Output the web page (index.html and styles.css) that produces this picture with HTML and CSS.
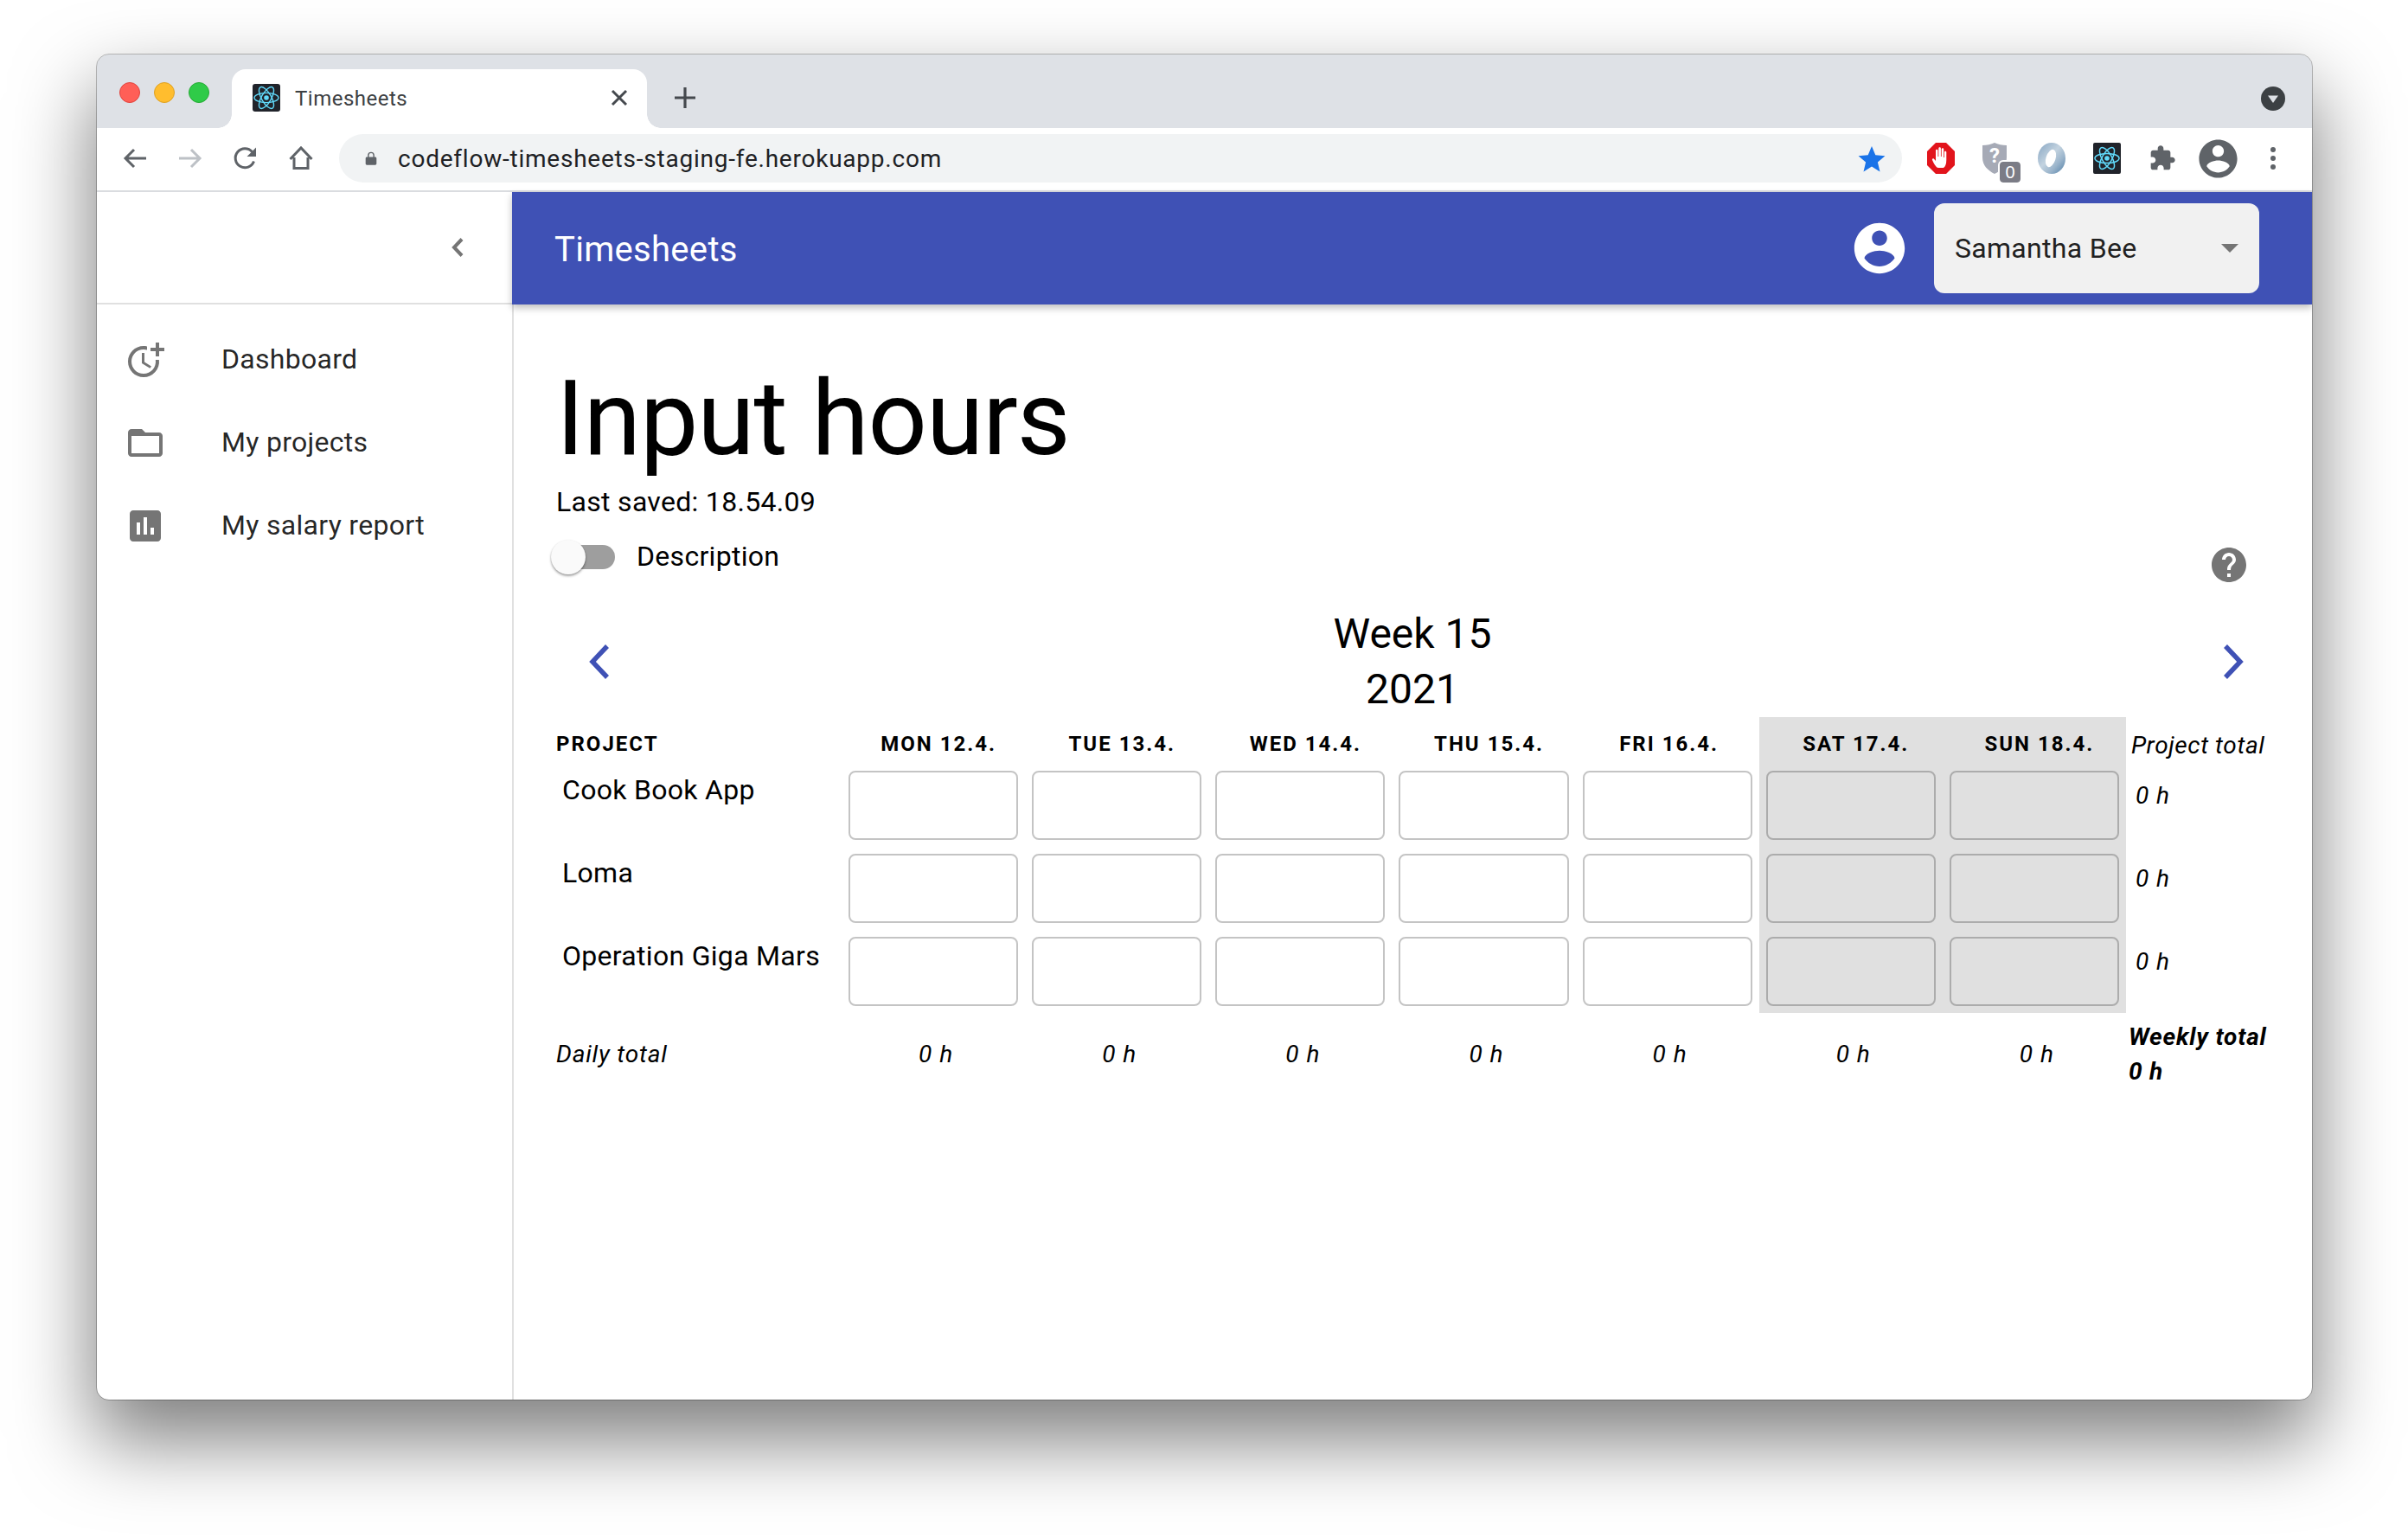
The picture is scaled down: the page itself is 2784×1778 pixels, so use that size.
FILE: index.html
```html
<!DOCTYPE html>
<html lang="en">

<head>
    <meta charset="UTF-8">
    <title>Timesheets</title>
    <link rel="stylesheet" href="styles.css">
</head>

<body>
    <div class="window">
        <!-- Browser chrome -->
        <div class="tab-strip">
            <div class="traffic">
                <span class="light light-red"></span>
                <span class="light light-yellow"></span>
                <span class="light light-green"></span>
            </div>
            <div class="tab">
                <svg class="favicon" viewBox="0 0 32 32">
                    <rect width="32" height="32" rx="3" fill="#20232a"/>
                    <g fill="none" stroke="#61dafb" stroke-width="1.4">
                        <ellipse cx="16" cy="16" rx="14" ry="5.6"/>
                        <ellipse cx="16" cy="16" rx="14" ry="5.6" transform="rotate(60 16 16)"/>
                        <ellipse cx="16" cy="16" rx="14" ry="5.6" transform="rotate(120 16 16)"/>
                    </g>
                    <circle cx="16" cy="16" r="2.8" fill="#61dafb"/>
                </svg>
                <span class="tab-title">Timesheets</span>
                <svg class="tab-close" viewBox="0 0 20 20"><path d="M2 2l16 16M18 2L2 18" stroke="#45494e" stroke-width="3" fill="none"/></svg>
            </div>
            <svg class="new-tab" viewBox="0 0 26 26"><path d="M13 1v24M1 13h24" stroke="#45494e" stroke-width="3.2" fill="none"/></svg>
            <div class="profile-dot">
                <svg viewBox="0 0 28 28"><circle cx="14" cy="14" r="14" fill="#3c4043"/><path d="M8 10.500h12L14 19z" fill="#dee1e6"/></svg>
            </div>
        </div>

        <div class="toolbar">
            <button class="tool-btn">
                <svg viewBox="0 0 32 32"><path d="M29 16H6M15 6L5 16l10 10" fill="none" stroke="#5f6368" stroke-width="3"/></svg>
            </button>
            <button class="tool-btn">
                <svg viewBox="0 0 32 32"><path d="M3 16h23M17 6l10 10-10 10" fill="none" stroke="#bdc1c6" stroke-width="3"/></svg>
            </button>
            <button class="tool-btn">
                <svg viewBox="0 0 32 32"><path d="M25.500 19.500A11 11 0 1 1 23.500 8.500" fill="none" stroke="#5f6368" stroke-width="3"/><path d="M28 3.500V14H17.500z" fill="#5f6368"/></svg>
            </button>
            <button class="tool-btn">
                <svg viewBox="0 0 32 32"><path d="M8 15v12.500h16V15M3.500 17L16 4l12.500 13" fill="none" stroke="#5f6368" stroke-width="3"/></svg>
            </button>

            <div class="address-bar">
                <svg class="lock" viewBox="0 0 20 24"><path d="M3 10h1.500V7a5.500 5.500 0 0 1 11 0v3H17c1 0 2 1 2 2v9c0 1-1 2-2 2H3c-1 0-2-1-2-2v-9c0-1 1-2 2-2zm3.500 0h7V7a3.500 3.500 0 0 0-7 0z" fill="#5f6368"/></svg>
                <span class="url">codeflow-timesheets-staging-fe.herokuapp.com</span>
                <svg class="star" viewBox="0 0 32 32"><path d="M16 2l4.300 10.300 11.100.9-8.500 7.300 2.600 10.900L16 25.500 6.500 31.400l2.600-10.900L.600 13.200l11.100-.9z" fill="#1a73e8"/></svg>
            </div>

            <div class="ext-group">
                <button class="tool-btn">
                    <svg class="ext-icon" viewBox="0 0 32 36">
                        <path d="M10 0h12l10 10v16L22 36H10L0 26V10z" fill="#e2141c"/>
                        <path d="M10 27c-1.500-2-3-4.500-4-7-.5-1.300 1-2.300 2-1.200l2 2.200V9c0-1.800 2.500-1.800 2.500 0v7h.8V6.500c0-1.800 2.600-1.800 2.600 0V16h.8V7.500c0-1.800 2.500-1.800 2.500 0V17h.8v-6c0-1.700 2.300-1.700 2.300 0v9c0 5-1.500 8-3.500 9H13c-1.300 0-2.200-.8-3-2z" fill="#fff"/>
                    </svg>
                </button>
                <button class="tool-btn">
                    <span class="shield-wrap">
                        <svg class="shield" viewBox="0 0 28 36">
                            <path d="M14 0c4 2 9 3 14 3v14c0 9-6 15-14 19C6 32 0 26 0 17V3c5 0 10-1 14-3z" fill="#a6aab6"/>
                            <text class="shield-mark" x="14" y="23" text-anchor="middle">?</text>
                        </svg>
                        <span class="badge">0</span>
                    </span>
                </button>
                <button class="tool-btn">
                    <svg class="ext-icon" viewBox="0 0 32 36">
                        <defs>
                            <linearGradient id="ringFill" x1="0" y1="0" x2="1" y2="1">
                                <stop offset="0" stop-color="#86a5c2"/>
                                <stop offset=".45" stop-color="#c3d3e0"/>
                                <stop offset=".7" stop-color="#9ab4cb"/>
                                <stop offset="1" stop-color="#4f7ea6"/>
                            </linearGradient>
                        </defs>
                        <ellipse cx="16" cy="18" rx="16" ry="18" fill="url(#ringFill)"/>
                        <ellipse cx="15" cy="18" rx="5.500" ry="10.500" transform="rotate(18 15 18)" fill="#fff"/>
                    </svg>
                </button>
                <button class="tool-btn">
                    <svg class="ext-icon" viewBox="0 0 32 36">
                        <rect width="32" height="36" rx="2" fill="#20232a"/>
                        <g fill="none" stroke="#61dafb" stroke-width="1.5">
                            <ellipse cx="16" cy="18" rx="14" ry="5.600"/>
                            <ellipse cx="16" cy="18" rx="14" ry="5.600" transform="rotate(60 16 18)"/>
                            <ellipse cx="16" cy="18" rx="14" ry="5.600" transform="rotate(120 16 18)"/>
                        </g>
                        <circle cx="16" cy="18" r="2.800" fill="#61dafb"/>
                    </svg>
                </button>
                <button class="tool-btn">
                    <svg class="puzzle" viewBox="0 0 24 24"><path d="M20.500 11H19V7c0-1.100-.9-2-2-2h-4V3.500C13 2.120 11.880 1 10.500 1S8 2.120 8 3.500V5H4c-1.100 0-1.990.9-1.990 2v3.800H3.500c1.490 0 2.700 1.210 2.700 2.700s-1.210 2.700-2.700 2.700H2V20c0 1.100.9 2 2 2h3.800v-1.500c0-1.490 1.210-2.700 2.700-2.700 1.490 0 2.700 1.210 2.700 2.700V22H17c1.100 0 2-.9 2-2v-4h1.500c1.380 0 2.500-1.120 2.500-2.500S21.880 11 20.500 11z" fill="#5f6368"/></svg>
                </button>
                <button class="tool-btn">
                    <svg class="chrome-avatar" viewBox="0 0 24 24"><path d="M12 2C6.480 2 2 6.480 2 12s4.480 10 10 10 10-4.480 10-10S17.520 2 12 2zm0 3c1.660 0 3 1.340 3 3s-1.340 3-3 3-3-1.340-3-3 1.340-3 3-3zm0 14.200c-2.500 0-4.710-1.280-6-3.220.03-1.990 4-3.080 6-3.080 1.990 0 5.970 1.090 6 3.080-1.290 1.940-3.500 3.220-6 3.220z" fill="#5f6368"/></svg>
                </button>
                <button class="tool-btn">
                    <span class="menu-dots"><i></i><i></i><i></i></span>
                </button>
            </div>
        </div>

        <!-- App -->
        <div class="app">
            <aside class="sidebar">
                <div class="sidebar-head">
                    <svg class="collapse" viewBox="0 0 16 24"><path d="M13 2.500L4 12l9 9.500" fill="none" stroke="#757575" stroke-width="4"/></svg>
                </div>
                <nav class="side-nav">
                    <a class="side-item">
                        <svg viewBox="0 0 24 24"><path d="M10 8v6l4.700 2.900.8-1.200-4-2.400V8z M17.920 12A6.957 6.957 0 0 1 11 20c-3.900 0-7-3.100-7-7s3.100-7 7-7c.7 0 1.370.1 2 .29V4.230C12.360 4.080 11.690 4 11 4c-5 0-9 4-9 9s4 9 9 9a8.963 8.963 0 0 0 8.940-10h-2.020z M20 5V2h-2v3h-3v2h3v3h2V7h3V5z" fill="#757575"/></svg>
                        <span>Dashboard</span>
                    </a>
                    <a class="side-item">
                        <svg viewBox="0 0 24 24"><path d="M20 6h-8l-2-2H4c-1.100 0-1.990.9-1.990 2L2 18c0 1.100.9 2 2 2h16c1.100 0 2-.9 2-2V8c0-1.100-.9-2-2-2zm0 12H4V8h16v10z" fill="#757575"/></svg>
                        <span>My projects</span>
                    </a>
                    <a class="side-item">
                        <svg viewBox="0 0 24 24"><path d="M19 3H5c-1.100 0-2 .9-2 2v14c0 1.100.9 2 2 2h14c1.100 0 2-.9 2-2V5c0-1.100-.9-2-2-2zM9 17H7v-7h2v7zm4 0h-2V7h2v10zm4 0h-2v-4h2v4z" fill="#757575"/></svg>
                        <span>My salary report</span>
                    </a>
                </nav>
            </aside>

            <div class="main">
                <header class="app-bar">
                    <div class="app-title">Timesheets</div>
                    <svg class="user-icon" viewBox="0 0 24 24"><path d="M12 2C6.480 2 2 6.480 2 12s4.480 10 10 10 10-4.480 10-10S17.520 2 12 2zm0 3c1.660 0 3 1.340 3 3s-1.340 3-3 3-3-1.340-3-3 1.340-3 3-3zm0 14.200c-2.500 0-4.710-1.280-6-3.220.03-1.990 4-3.080 6-3.080 1.990 0 5.970 1.090 6 3.080-1.290 1.940-3.500 3.220-6 3.220z" fill="#fff"/></svg>
                    <div class="user-select">
                        <span>Samantha Bee</span>
                        <span class="select-arrow"></span>
                    </div>
                </header>

                <section class="content">
                    <h1 class="page-title">Input hours</h1>
                    <p class="last-saved">Last saved: 18.54.09</p>

                    <div class="options-row">
                        <label class="switch-label">
                            <span class="switch"><span class="switch-thumb"></span></span>
                            Description
                        </label>
                        <svg class="help-icon" viewBox="0 0 24 24"><path d="M12 2C6.480 2 2 6.480 2 12s4.480 10 10 10 10-4.480 10-10S17.520 2 12 2zm1 17h-2v-2h2v2zm2.070-7.750l-.9.92C13.450 12.900 13 13.500 13 15h-2v-.5c0-1.100.45-2.100 1.170-2.830l1.240-1.260c.37-.36.59-.86.59-1.410 0-1.100-.9-2-2-2s-2 .9-2 2H8c0-2.210 1.790-4 4-4s4 1.790 4 4c0 .88-.36 1.680-.93 2.250z" fill="#757575"/></svg>
                    </div>

                    <div class="week-row">
                        <button class="week-btn">
                            <svg viewBox="0 0 24 40"><path d="M21 2L4 20l17 18" fill="none" stroke="#3f51b5" stroke-width="5.500"/></svg>
                        </button>
                        <div class="week-title">Week 15<br>2021</div>
                        <button class="week-btn">
                            <svg viewBox="0 0 24 40"><path d="M3 2l17 18L3 38" fill="none" stroke="#3f51b5" stroke-width="5.500"/></svg>
                        </button>
                    </div>

                    <table class="hours">
                        <colgroup>
                            <col class="col-project">
                            <col span="7" class="col-day">
                            <col class="col-total">
                        </colgroup>
                        <thead>
                            <tr>
                                <th class="head-project">PROJECT</th>
                                <th class="head-day">MON 12.4.</th>
                                <th class="head-day">TUE 13.4.</th>
                                <th class="head-day">WED 14.4.</th>
                                <th class="head-day">THU 15.4.</th>
                                <th class="head-day head-fri">FRI 16.4.</th>
                                <th class="head-day weekend">SAT 17.4.</th>
                                <th class="head-day weekend">SUN 18.4.</th>
                                <th class="head-total">Project total</th>
                            </tr>
                        </thead>
                        <tbody>
                            <tr>
                                <td class="project-name">Cook Book App</td>
                                <td><input class="hour-input" type="text"></td>
                                <td><input class="hour-input" type="text"></td>
                                <td><input class="hour-input" type="text"></td>
                                <td><input class="hour-input" type="text"></td>
                                <td><input class="hour-input" type="text"></td>
                                <td class="weekend"><input class="hour-input" type="text"></td>
                                <td class="weekend"><input class="hour-input" type="text"></td>
                                <td class="row-total">0 h</td>
                            </tr>
                            <tr>
                                <td class="project-name">Loma</td>
                                <td><input class="hour-input" type="text"></td>
                                <td><input class="hour-input" type="text"></td>
                                <td><input class="hour-input" type="text"></td>
                                <td><input class="hour-input" type="text"></td>
                                <td><input class="hour-input" type="text"></td>
                                <td class="weekend"><input class="hour-input" type="text"></td>
                                <td class="weekend"><input class="hour-input" type="text"></td>
                                <td class="row-total">0 h</td>
                            </tr>
                            <tr>
                                <td class="project-name">Operation Giga Mars</td>
                                <td><input class="hour-input" type="text"></td>
                                <td><input class="hour-input" type="text"></td>
                                <td><input class="hour-input" type="text"></td>
                                <td><input class="hour-input" type="text"></td>
                                <td><input class="hour-input" type="text"></td>
                                <td class="weekend"><input class="hour-input" type="text"></td>
                                <td class="weekend"><input class="hour-input" type="text"></td>
                                <td class="row-total">0 h</td>
                            </tr>
                        </tbody>
                        <tfoot>
                            <tr>
                                <td class="foot-label">Daily total</td>
                                <td class="foot-day">0 h</td>
                                <td class="foot-day">0 h</td>
                                <td class="foot-day">0 h</td>
                                <td class="foot-day">0 h</td>
                                <td class="foot-day">0 h</td>
                                <td class="foot-day">0 h</td>
                                <td class="foot-day">0 h</td>
                                <td class="foot-total">Weekly total<br>0 h</td>
                            </tr>
                        </tfoot>
                    </table>
                </section>
            </div>
        </div>
    </div>
</body>

</html>
```

FILE: styles.css
```css
/* Base Styles */
* {
    box-sizing: border-box;
}

html,
body {
    margin: 0;
    padding: 0;
}

body {
    width: 2784px;
    height: 1778px;
    padding: 63px 0 0 112px;
    background-color: #fff;
    font-family: Roboto, "Liberation Sans", sans-serif;
    color: rgba(0, 0, 0, 0.87);
    overflow: hidden;
}

button {
    padding: 0;
    border: 0;
    background: none;
}

svg {
    display: block;
}

.window {
    display: flex;
    flex-direction: column;
    width: 2561px;
    height: 1555px;
    background-color: #fff;
    border-radius: 14px;
    outline: 1px solid rgba(0, 0, 0, 0.25);
    box-shadow: 0 44px 90px 4px rgba(0, 0, 0, 0.5);
    overflow: hidden;
}

/* Tab strip */
.tab-strip {
    display: flex;
    align-items: flex-end;
    flex: 0 0 85px;
    background-color: #dee1e6;
}

.traffic {
    display: flex;
    gap: 16px;
    align-self: flex-start;
    width: 156px;
    padding: 32px 0 0 26px;
}

.light {
    width: 24px;
    height: 24px;
    border-radius: 50%;
}

.light-red {
    background-color: #ff5f57;
    border: 1px solid #e0443e;
}

.light-yellow {
    background-color: #ffbd2e;
    border: 1px solid #dea123;
}

.light-green {
    background-color: #2fcb48;
    border: 1px solid #27aa35;
}

.tab {
    position: relative;
    display: flex;
    align-items: center;
    width: 480px;
    height: 68px;
    padding: 0 22px 2px 24px;
    background-color: #fff;
    border-radius: 16px 16px 0 0;
}

.tab::before,
.tab::after {
    content: "";
    position: absolute;
    bottom: 0;
    width: 16px;
    height: 16px;
}

.tab::before {
    left: -16px;
    background: radial-gradient(circle at 0 0, transparent 15.5px, #fff 16px);
}

.tab::after {
    right: -16px;
    background: radial-gradient(circle at 100% 0, transparent 15.5px, #fff 16px);
}

.favicon {
    width: 32px;
    height: 32px;
    margin-right: 17px;
}

.tab-title {
    flex: 1;
    padding-top: 1px;
    font-size: 24px;
    letter-spacing: 0.5px;
    color: #3c4043;
}

.tab-close {
    width: 20px;
    height: 20px;
}

.new-tab {
    width: 26px;
    height: 26px;
    margin: 0 0 22px 31px;
}

.profile-dot {
    margin: 0 31px 20px auto;
}

.profile-dot svg {
    width: 28px;
    height: 28px;
}

/* Toolbar */
.toolbar {
    display: flex;
    align-items: center;
    flex: 0 0 74px;
    padding: 0 13px 2px 12px;
    border-bottom: 2px solid #dadce0;
}

.tool-btn {
    display: flex;
    align-items: center;
    justify-content: center;
    width: 64px;
    height: 64px;
}

.tool-btn svg {
    width: 32px;
    height: 32px;
}

.address-bar {
    display: flex;
    align-items: center;
    flex: 1;
    height: 56px;
    margin: 0 13px 0 12px;
    padding: 0 19px 0 30px;
    background-color: #f1f3f4;
    border-radius: 28px;
}

.lock {
    width: 14px;
    height: 20px;
    margin-right: 24px;
}

.url {
    flex: 1;
    font-size: 28px;
    letter-spacing: 0.77px;
    color: #202124;
}

.address-bar .star {
    width: 32px;
    height: 32px;
}

.ext-group {
    display: flex;
}

.tool-btn .ext-icon {
    width: 32px;
    height: 36px;
}

.shield-wrap {
    position: relative;
    display: block;
    width: 32px;
    height: 36px;
}

.tool-btn .shield {
    width: 28px;
    height: 36px;
}

.shield-mark {
    font-family: Roboto, sans-serif;
    font-size: 24px;
    font-weight: 700;
    fill: #fff;
}

.badge {
    position: absolute;
    top: 22px;
    left: 20px;
    width: 24px;
    height: 24px;
    border: 0;
    border-radius: 4px;
    background-color: #7b7c86;
    outline: 2px solid #fff;
    color: #fff;
    font-size: 20px;
    line-height: 25px;
    text-align: center;
}

.tool-btn .chrome-avatar {
    width: 53px;
    height: 53px;
    flex: none;
}

.menu-dots {
    display: flex;
    flex-direction: column;
    gap: 4px;
}

.menu-dots i {
    width: 6px;
    height: 6px;
    border-radius: 50%;
    background-color: #5f6368;
}

/* App layout */
.app {
    display: flex;
    flex: 1;
    min-height: 0;
}

.sidebar {
    flex: 0 0 482px;
    border-right: 2px solid #e0e0e0;
}

.sidebar-head {
    display: flex;
    align-items: center;
    justify-content: flex-end;
    height: 130px;
    padding-right: 55px;
    border-bottom: 2px solid #e0e0e0;
}

.collapse {
    width: 16px;
    height: 24px;
}

.side-nav {
    padding-top: 16px;
}

.side-item {
    display: flex;
    align-items: center;
    height: 96px;
    padding-left: 32px;
    font-size: 32px;
    letter-spacing: 0.3px;
}

.side-item svg {
    width: 48px;
    height: 48px;
    margin-right: 64px;
}

.side-item span {
    padding-bottom: 3px;
}

.main {
    flex: 1;
    min-width: 0;
}

.app-bar {
    display: flex;
    align-items: center;
    height: 130px;
    margin-left: -2px;
    padding: 0 61px 0 49px;
    background-color: #3f51b5;
    color: #fff;
    box-shadow: 0 4px 8px rgba(0, 0, 0, 0.25);
}

.app-title {
    flex: 1;
    padding-top: 2px;
    font-size: 40px;
    letter-spacing: 0.3px;
}

.user-icon {
    width: 70px;
    height: 70px;
    margin-right: 28px;
}

.user-select {
    display: flex;
    align-items: center;
    justify-content: space-between;
    width: 376px;
    height: 104px;
    padding: 0 24px 0 24px;
    background-color: #f1f1f1;
    border-radius: 12px;
    color: #212121;
    font-size: 32px;
    letter-spacing: 0.3px;
}

.select-arrow {
    border-left: 10px solid transparent;
    border-right: 10px solid transparent;
    border-top: 10px solid #757575;
}

/* Content */
.content {
    padding: 60px 31px 0 49px;
}

.page-title {
    margin: 0;
    font-size: 120px;
    font-weight: 400;
    line-height: 144px;
    letter-spacing: -1px;
    color: #000;
}

.last-saved {
    margin: 0;
    font-size: 32px;
    line-height: 48px;
    letter-spacing: 0.3px;
    color: #000;
}

.options-row {
    display: flex;
    justify-content: space-between;
    height: 97px;
    padding-right: 41px;
}

.switch-label {
    display: flex;
    align-items: center;
    height: 78px;
    font-size: 32px;
    letter-spacing: 0.3px;
    color: #000;
}

.switch {
    position: relative;
    width: 68px;
    height: 28px;
    margin: 2px 25px 0 0;
    background-color: #9e9e9e;
    border-radius: 14px;
}

.switch-thumb {
    position: absolute;
    top: -6px;
    left: -6px;
    width: 40px;
    height: 40px;
    background-color: #fafafa;
    border-radius: 50%;
    box-shadow: 0 2px 3px rgba(0, 0, 0, 0.3), 0 1px 2px rgba(0, 0, 0, 0.15);
}

.help-icon {
    width: 48px;
    height: 48px;
    margin-top: 25px;
}

.week-row {
    display: flex;
    align-items: center;
    justify-content: space-between;
    height: 128px;
    padding-right: 10px;
}

.week-btn {
    display: flex;
    align-items: center;
    justify-content: center;
    width: 100px;
    height: 100px;
}

.week-btn svg {
    width: 24px;
    height: 40px;
}

.week-title {
    flex: 1;
    padding-right: 9px;
    font-size: 48px;
    line-height: 64px;
    text-align: center;
    color: #000;
}

/* Hours table */
.hours {
    width: 1997px;
    border-collapse: collapse;
    table-layout: fixed;
    color: #000;
}

.col-project {
    width: 330px;
}

.col-day {
    width: 212.14px;
}

.col-total {
    width: 182px;
}

.hours th,
.hours td {
    padding: 0;
}

.hours thead tr {
    height: 54px;
}

.hours th {
    padding-top: 8px;
    font-size: 24px;
    font-weight: 700;
    letter-spacing: 2px;
    text-align: left;
}

.hours .head-day {
    padding-left: 12px;
    text-align: center;
}

.hours .head-fri {
    padding-left: 4px;
}

.hours .head-total {
    padding: 10px 0 0 6px;
    font-size: 28px;
    font-style: italic;
    font-weight: 400;
    letter-spacing: 0.6px;
}

.hours tbody tr {
    height: 96px;
}

.hours tbody td {
    padding: 8px;
    vertical-align: top;
}

.hours tbody .project-name {
    padding: 6px 0 0 7px;
    font-size: 32px;
    line-height: 48px;
    letter-spacing: 0.3px;
    white-space: nowrap;
}

.hour-input {
    display: block;
    width: 100%;
    height: 80px;
    background: transparent;
    border: 2px solid rgba(0, 0, 0, 0.23);
    border-radius: 8px;
}

.weekend {
    background-color: #e0e0e0;
}

.hours tbody .row-total {
    padding: 17px 0 0 11px;
    font-size: 28px;
    font-style: italic;
    line-height: 40px;
    letter-spacing: 1px;
}

.hours tfoot tr {
    height: 96px;
}

.foot-label,
.foot-day,
.foot-total {
    font-size: 28px;
    font-style: italic;
    line-height: 40px;
}

.foot-label {
    letter-spacing: 0.8px;
}

.hours .foot-day {
    padding-left: 6px;
    text-align: center;
    letter-spacing: 1px;
}

.hours .foot-total {
    padding-left: 3px;
    font-weight: 700;
    letter-spacing: 0.8px;
}
```
